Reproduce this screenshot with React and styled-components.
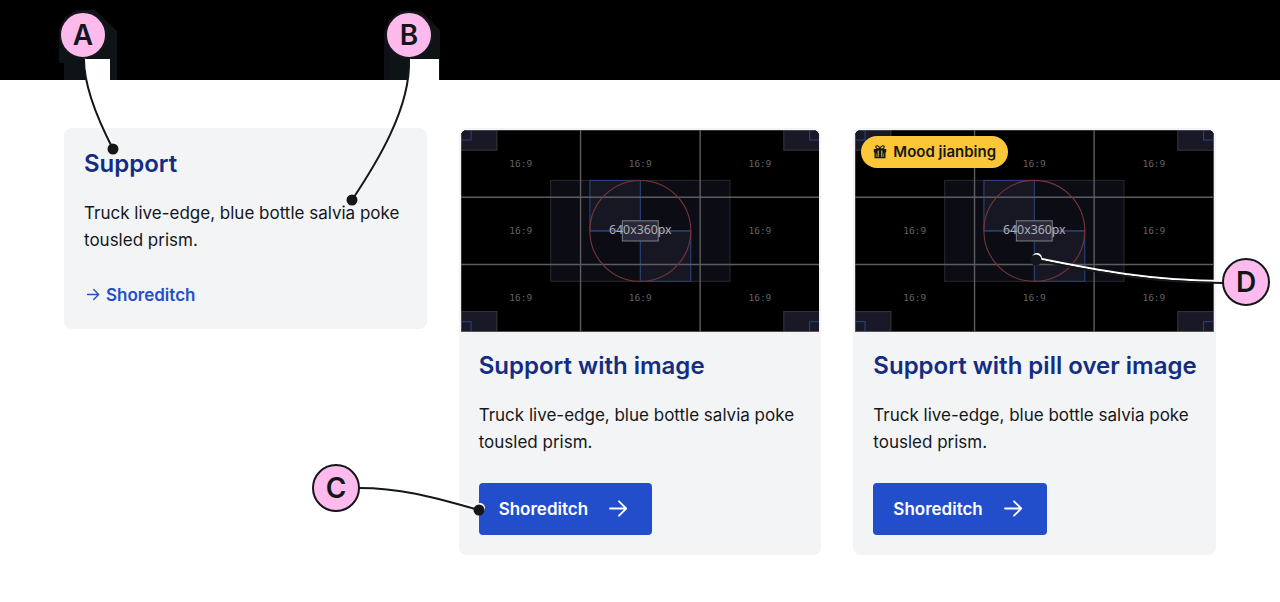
import React from "react";
import styled, { createGlobalStyle } from "styled-components";

const GlobalStyle = createGlobalStyle`
  * { box-sizing: border-box; }
  body {
    margin: 0;
    background: #fff;
    color: #13171a;
    font-family: Inter, "Liberation Sans", sans-serif;
  }
`;

const Banner = styled.header`
  height: 80px;
  background: #000;
`;

const CardGrid = styled.main`
  display: grid;
  grid-template-columns: repeat(3, minmax(0, 1fr));
  align-items: start;
  gap: 32px;
  padding: 48px 64px;
`;

const Cell = styled.div`
  position: relative;
`;

const Card = styled.article`
  background: #f3f4f6;
  border: 2px solid #f3f4f6;
  border-radius: 8px;
`;

const Media = styled.div`
  position: relative;
  aspect-ratio: 16 / 9;
  overflow: hidden;
  border-radius: 6px 6px 0 0;
  background: #000;

  > svg {
    display: block;
    width: 100%;
    height: 100%;
  }
`;

const CardBody = styled.div`
  display: flex;
  flex-direction: column;
  align-items: flex-start;
  padding: 18px;
`;

const Title = styled.h2`
  margin: 0 0 20px;
  color: #142d82;
  font-size: 24px;
  line-height: 32px;
  font-weight: 600;
  white-space: nowrap;
`;

const Text = styled.p`
  margin: 0 0 27px;
  font-size: 17px;
  line-height: 27px;
`;

const TextLink = styled.a`
  display: inline-flex;
  align-items: center;
  gap: 6px;
  color: #244fc9;
  font-size: 17px;
  line-height: 28px;
  font-weight: 600;
  text-decoration: none;
`;

const ButtonLink = styled.a`
  display: inline-flex;
  align-items: center;
  gap: 20px;
  padding: 12px 20px;
  border-radius: 4px;
  background: #234ecb;
  color: #fff;
  font-size: 17px;
  line-height: 28px;
  font-weight: 600;
  text-decoration: none;
`;

const Pill = styled.span`
  position: absolute;
  top: 6px;
  left: 6px;
  display: inline-flex;
  align-items: center;
  gap: 6px;
  padding: 4px 12px;
  border-radius: 16px;
  background: #fbc738;
  font-size: 15px;
  line-height: 24px;
  font-weight: 600;
`;

const Callouts = styled.svg`
  position: absolute;
  top: 0;
  left: 0;
  width: 1px;
  height: 1px;
  overflow: visible;
  pointer-events: none;
`;

const LinkArrow = () => (
  <svg width="16" height="16" viewBox="0 0 16 16" fill="none" stroke="currentColor" strokeWidth="1.3" strokeLinecap="round" strokeLinejoin="round" aria-hidden="true">
    <path d="M3.500 7.500h11M9.700 2.500l5 5-5 5" />
  </svg>
);

const ButtonArrow = () => (
  <svg width="24" height="24" viewBox="0 0 24 24" fill="none" stroke="currentColor" strokeWidth="1.8" strokeLinecap="round" strokeLinejoin="round" aria-hidden="true">
    <path d="M2 11.500h16M11 4.300 18.200 11.500l-7.200 7.200" />
  </svg>
);

const Gift = () => (
  <svg width="14" height="16" viewBox="0 0 14 16" aria-hidden="true">
    <path d="M7 5C5.500 5 2.800 4.500 2.800 2.900 2.800 1.200 5.600 1.200 7 4.600 8.400 1.200 11.200 1.200 11.200 2.900 11.200 4.500 8.500 5 7 5Z" fill="none" stroke="#13171a" strokeWidth="1.1" />
    <path d="M.8 5h12.400v3.200H.8ZM1.500 8h11v6.300H1.500Z" fill="#13171a" />
    <path d="M5.200 6.500v6.500M8.800 6.500v6.500" stroke="#fbc738" strokeWidth="1" />
    <path d="M3.300 9.500v3.500M10.700 9.500v3.500" stroke="#fbc738" strokeWidth="0.5" />
  </svg>
);

const CELLS = [320 / 3, 320, 1600 / 3].flatMap((x) => [60, 180, 300].map((y) => [x, y]));
const CORNERS = [[0, 0, 0, 0], [576, 0, 622, 0], [0, 324, 0, 342], [576, 324, 622, 342]];

const Placeholder = ({ hideFirstLabel }) => {
  const labels = CELLS.filter((_, i) => i !== 4 && !(hideFirstLabel && i === 0));
  return (
    <svg viewBox="0 0 640 360" role="img" aria-label="Placeholder, 640 by 360 pixels">
      <rect width="640" height="360" fill="#000" />
      <g fill="#181827" stroke="#343438" strokeWidth="2">
        <rect x="160" y="90" width="320" height="180" fill="#0c0c15" stroke="#25262a" />
        {CORNERS.map(([x, y]) => <rect key={`${x}-${y}`} x={x} y={y} width="64" height="36" />)}
      </g>
      <g fill="#171724" stroke="#2a4078" strokeWidth="2">
        <rect x="230" y="90" width="90" height="90" />
        <rect x="320" y="180" width="90" height="90" />
        {CORNERS.map(([x, y, sx, sy]) => <rect key={`${x}-${y}`} x={sx} y={sy} width="18" height="18" fill="none" />)}
        <path d="M230 180h180" />
      </g>
      <path d="M213.300 0v360M426.700 0v360M0 120h640M0 240h640" stroke="#5d5d5f" strokeWidth="2.500" />
      <rect x="0" y="0" width="640" height="360" fill="none" stroke="#5d5d5f" strokeWidth="2" />
      <circle cx="320" cy="180" r="90" fill="none" stroke="#753638" strokeWidth="2" />
      <rect x="288" y="162" width="64" height="36" fill="#29293a" stroke="#74747b" strokeWidth="2" />
      <g fill="#626264" fontFamily="'DejaVu Sans Mono', monospace" fontSize="17" textAnchor="middle">
        {labels.map(([x, y]) => (
          <text key={`${x}-${y}`} x={x} y={y + 6}>16:9</text>
        ))}
      </g>
      <text x="320" y="186" fill="#afafb3" fontFamily="'Noto Sans', sans-serif" fontSize="22" textAnchor="middle">640x360px</text>
    </svg>
  );
};

const Callout = ({ letter, x, y, dotX, dotY, path }) => (
  <g>
    <g fill="none" stroke="#fff" strokeWidth="2" transform="translate(1 -2)">
      <path d={path} />
      <circle cx={dotX} cy={dotY} r="4" fill="#fff" />
    </g>
    <path d={path} fill="none" stroke="#13171a" strokeWidth="2" />
    <circle cx={dotX} cy={dotY} r="5.500" fill="#13171a" />
    <circle cx={x} cy={y} r="23" fill="#ffbaed" stroke="#13171a" strokeWidth="2" />
    <text x={x} y={y + 10} textAnchor="middle" fontFamily="Inter, sans-serif" fontWeight="600" fontSize="28" fill="#13171a">{letter}</text>
  </g>
);

const BODY_TEXT = "Truck live-edge, blue bottle salvia poke tousled prism.";

const ImageCard = ({ title, pill }) => (
  <Card>
    <Media>
      <Placeholder hideFirstLabel={Boolean(pill)} />
      {pill && <Pill><Gift />{pill}</Pill>}
    </Media>
    <CardBody>
      <Title>{title}</Title>
      <Text>{BODY_TEXT}</Text>
      <ButtonLink href="#shoreditch">Shoreditch<ButtonArrow /></ButtonLink>
    </CardBody>
  </Card>
);

export default function App() {
  return (
    <>
      <GlobalStyle />
      <Banner />
      <CardGrid>
        <Cell>
          <Card>
            <CardBody>
              <Title>Support</Title>
              <Text>{BODY_TEXT}</Text>
              <TextLink href="#shoreditch"><LinkArrow />Shoreditch</TextLink>
            </CardBody>
          </Card>
          <Callouts>
            <path d="M-5 -98 1 -111 13 -118H31L53 -97V-48H0V-65H-5Z" fill="#0e1315" />
            <path d="M320 -94 325 -107 337 -117H357L376 -98V-48H320Z" fill="#0e1315" />
            <path d="M320 -94h5v46h-5Z" fill="#100e19" />
            <path d="M20 -69H46V-48H22ZM346 -69H375V-48H344Z" fill="#fff" />
            <Callout letter="A" x={19} y={-93} dotX={49} dotY={21} path="M20 -69C20 -42 35 -6 49 21" />
            <Callout letter="B" x={345} y={-93} dotX={288} dotY={72} path="M345 -69C347 -20 312 36 288 72" />
          </Callouts>
        </Cell>
        <Cell>
          <ImageCard title="Support with image" />
          <Callouts>
            <Callout letter="C" x={-123} y={360} dotX={20} dotY={382} path="M-100 360C-55 360 -20 371 20 382" />
          </Callouts>
        </Cell>
        <Cell>
          <ImageCard title="Support with pill over image" pill="Mood jianbing" />
          <Callouts>
            <Callout letter="D" x={393} y={154} dotX={183} dotY={132} path="M183 132C242 144 298 155 370 155" />
          </Callouts>
        </Cell>
      </CardGrid>
    </>
  );
}
